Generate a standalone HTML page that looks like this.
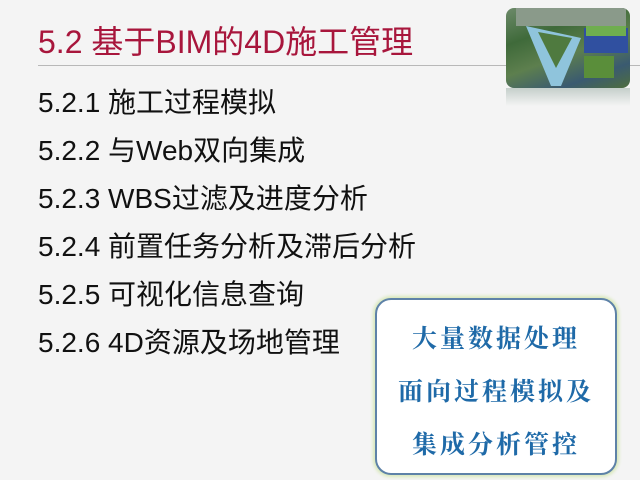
<!DOCTYPE html>
<html><head><meta charset="utf-8"><style>
body{margin:0;width:640px;height:480px;background:#f4f4f4;position:relative;overflow:hidden;font-family:"Liberation Sans","Noto Sans CJK SC",sans-serif}
.t{position:absolute;left:38px;top:23px;font-size:32px;line-height:38px;color:#a8163c;white-space:nowrap}
.hr{position:absolute;left:38px;right:0;top:65px;height:1px;background:#b8b8b8}
.li{position:absolute;left:38px;font-size:28px;line-height:32px;color:#111;white-space:nowrap}
.img{position:absolute;left:506px;top:8px;width:124px;height:80px;border-radius:8px;overflow:hidden;background:linear-gradient(160deg,#6d8a6a 0%,#3f6a3a 30%,#5d7f4e 55%,#3a5a70 80%,#4e6e3e 100%)}
.refl{position:absolute;left:506px;top:88px;width:124px;height:18px;background:linear-gradient(#b9c6c0,#f4f4f4);opacity:.8}
.box{position:absolute;left:375px;top:298px;width:238px;height:173px;border:2px solid #5e82a8;border-radius:16px;background:#fff;box-shadow:0 0 3px 2px #d8e8b8;font-family:"Noto Serif CJK SC",serif;font-weight:bold;color:#1f6aa8;font-size:25px;line-height:30px;text-align:center;letter-spacing:3px}
.box div{position:absolute;left:0;right:0}
</style></head><body>
<div class="t">5.2 基于BIM的4D施工管理</div>
<div class="hr"></div>
<div class="img">
<svg width="124" height="80"><rect x="10" y="0" width="110" height="18" fill="#8a9a8a"/><polygon points="20,18 75,30 55,78 45,78" fill="#8fc4dc"/><polygon points="32,24 66,30 50,60" fill="#4f7a3f"/><rect x="78" y="20" width="44" height="25" fill="#3050a0"/><rect x="80" y="18" width="40" height="10" fill="#6fae4f"/><rect x="78" y="48" width="30" height="22" fill="#5a8e3a"/></svg>
</div>
<div class="refl"></div>
<div class="li" style="top:87px">5.2.1 施工过程模拟</div>
<div class="li" style="top:135px">5.2.2 与Web双向集成</div>
<div class="li" style="top:183px">5.2.3 WBS过滤及进度分析</div>
<div class="li" style="top:231px">5.2.4 前置任务分析及滞后分析</div>
<div class="li" style="top:279px">5.2.5 可视化信息查询</div>
<div class="li" style="top:327px">5.2.6 4D资源及场地管理</div>
<div class="box">
<div style="top:22px">大量数据处理</div>
<div style="top:75px">面向过程模拟及</div>
<div style="top:128px">集成分析管控</div>
</div>
</body></html>
